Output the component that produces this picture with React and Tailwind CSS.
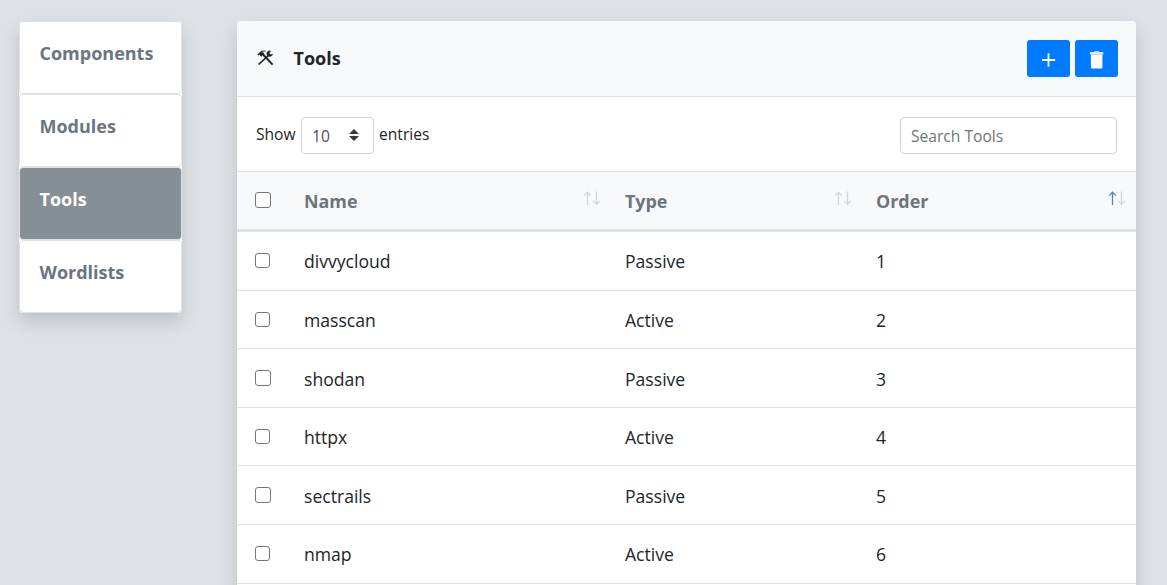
import React from 'react';

const navItems = ['Components', 'Modules', 'Tools', 'Wordlists'];

const rows = [
  { name: 'divvycloud', type: 'Passive', order: 1, box: 'h-[59px] pt-4' },
  { name: 'masscan', type: 'Active', order: 2, box: 'h-[58px] pt-4' },
  { name: 'shodan', type: 'Passive', order: 3, box: 'h-[59px] pt-[17px]', large: true },
  { name: 'httpx', type: 'Active', order: 4, box: 'h-[58px] pt-4' },
  { name: 'sectrails', type: 'Passive', order: 5, box: 'h-[59px] pt-[17px]', large: true },
  { name: 'nmap', type: 'Active', order: 6, box: 'h-[59px] pt-4' },
];

const columns = 'grid grid-cols-[67px_321px_251px_260px]';

function Checkbox({ large = false }) {
  return (
    <input
      type="checkbox"
      className={
        large
          ? 'block h-4 w-4 shrink-0 appearance-none rounded-[3px] border border-[#767676] bg-white'
          : 'mt-px block h-[15px] w-[15px] shrink-0 appearance-none rounded-[3px] border border-[#767676] bg-white'
      }
    />
  );
}

function SortArrows({ ascending = false }) {
  return (
    <svg className="h-[15px] w-[18px]" viewBox="0 0 18 15" fill="none" strokeWidth="1.3">
      <path d="M4.5 14V1.2M1.2 4.6 4.5 1.2 7.8 4.6" stroke={ascending ? '#4f86c0' : '#d2d5d8'} />
      <path d="M13.5 .5V13.3M10.2 9.9 13.5 13.3 16.8 9.9" stroke="#d2d5d8" />
    </svg>
  );
}

function HeaderCell({ label, ascending }) {
  return (
    <div
      className={
        ascending
          ? 'flex items-start justify-between pt-4 pr-[10px]'
          : 'flex items-start justify-between pt-4 pr-6'
      }
    >
      <span className="text-[17.9px] leading-[26px] font-bold text-[#6c757d]">{label}</span>
      <span className="pt-[3px]">
        <SortArrows ascending={ascending} />
      </span>
    </div>
  );
}

function ToolsIcon() {
  return (
    <svg className="h-4 w-[17px]" viewBox="0 0 17 16" fill="none" stroke="#212529">
      <path d="M5.6 4 15.6 14.6" strokeWidth="2" />
      <path d="M.8 5 4.6 1.3 8.4 1" strokeWidth="1.1" />
      <path d="M2.4 4.3 4.8 2 7 3.6 4.2 6.2Z" fill="#212529" strokeWidth=".8" />
      <path d="M1.6 14.5 11.2 5.6" strokeWidth="1.7" />
      <path d="M13.6 .9A3 3 0 0 0 10.2 5.4 3.2 3.2 0 0 0 15.7 4.2L13.2 4.6 12.2 3.2Z" fill="#212529" strokeWidth=".4" />
    </svg>
  );
}

export default function App() {
  return (
    <div className="flex h-[585px] w-full items-start overflow-hidden bg-[#dee2e6] pt-[21px] pl-[19px] font-['Open_Sans','Noto_Sans',sans-serif] text-[#212529]">
      <nav className="w-[163px] shrink-0 rounded bg-white shadow-[0_9px_18px_rgba(0,0,0,0.15)]">
        {navItems.map((item) => (
          <a
            key={item}
            className={
              item === 'Tools'
                ? 'block h-[73px] rounded border border-[#dee2e6] bg-[#868e96] pt-[18px] pl-[19.5px] text-[18px] leading-[26px] font-bold text-white'
                : 'block h-[73px] rounded border border-[#dee2e6] bg-white pt-[18px] pl-[19.5px] text-[18px] leading-[26px] font-bold text-[#6c757d]'
            }
          >
            {item}
          </a>
        ))}
      </nav>

      <main className="ml-[55px] min-h-[600px] w-[899px] shrink-0 overflow-clip rounded bg-white shadow-[0_9px_18px_rgba(0,0,0,0.15)]">
        <header className="flex h-[76px] items-start justify-between border-b border-[#dee2e6] bg-[#f8f9fa] pt-[19px] pr-[18px] pl-5">
          <div className="flex items-start gap-[19.5px] pt-[5px]">
            <div className="pt-[5px]">
              <ToolsIcon />
            </div>
            <h1 className="text-[18px] leading-[26px] font-bold">Tools</h1>
          </div>
          <div className="flex gap-[5px]">
            <button className="flex h-[37px] w-[43px] items-center justify-center rounded-[3px] bg-[#007bff] pt-[3px]">
              <svg className="h-[14px] w-[14px]" viewBox="0 0 14 14" stroke="#fff" strokeWidth="1.8">
                <path d="M6.5 .2V13.8M0 7H13.2" />
              </svg>
            </button>
            <button className="flex h-[37px] w-[43px] items-center justify-center rounded-[3px] bg-[#007bff] pt-[3px]">
              <svg className="h-[18px] w-[14px]" viewBox="0 0 14 18" fill="#fff">
                <path d="M3.8 1Q4 .2 4.8 .2H8.4Q9.2 .2 9.4 1H12.6Q13.3 1 13.3 1.8V3.4H0V1.8Q0 1 .7 1Z" fillOpacity=".85" />
                <path d="M.9 3.4H12.4V16Q12.4 17.6 10.9 17.6H2.4Q.9 17.6 .9 16Z" />
              </svg>
            </button>
          </div>
        </header>

        <div className="flex h-[74px] items-start justify-between pt-5 pr-[19px] pl-[19px]">
          <div className="flex items-start text-[15.6px] leading-[34px]">
            <span className="w-[45px]">Show</span>
            <div className="flex h-[37px] w-[73px] items-start justify-between rounded-[4px] border border-[#ced4da] pr-[14px] pl-[10px] leading-[36px] text-[#495057]">
              <span>10</span>
              <svg className="mt-[11px] h-3 w-[10px]" viewBox="0 0 10 12" fill="#343a40">
                <path d="M5 0 10 5H0ZM0 7H10L5 12Z" />
              </svg>
            </div>
            <span className="pl-[5px]">entries</span>
          </div>
          <input
            className="h-[37px] w-[217px] rounded-[4px] border border-[#ced4da] px-[10px] text-[15.6px] placeholder:text-[#6c757d]"
            placeholder="Search Tools"
          />
        </div>

        <div className={`${columns} h-[61px] border-t border-b-[3px] border-[#dee2e6] bg-[#f8f9fa]`}>
          <div className="pt-5 pl-[18px]">
            <Checkbox large />
          </div>
          <HeaderCell label="Name" />
          <HeaderCell label="Type" />
          <HeaderCell label="Order" ascending />
        </div>

        {rows.map((row) => (
          <div
            key={row.name}
            className={`${columns} ${row.box} border-b border-[#dee2e6] text-[17.6px] leading-[26px]`}
          >
            <div className="pt-[4px] pl-[18px]">
              <Checkbox large={row.large} />
            </div>
            <span>{row.name}</span>
            <span>{row.type}</span>
            <span>{row.order}</span>
          </div>
        ))}
      </main>
    </div>
  );
}
